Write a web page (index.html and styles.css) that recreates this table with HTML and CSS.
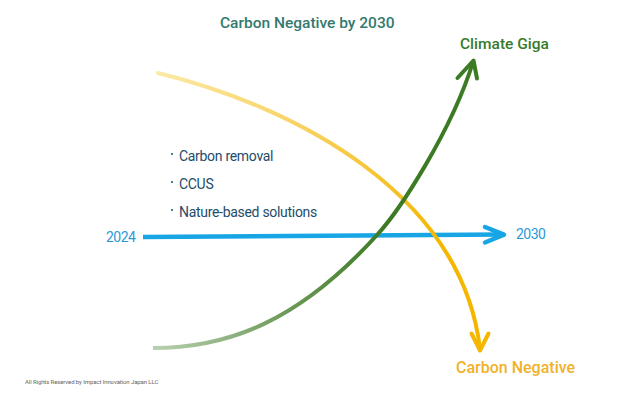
FILE: index.html
```html
<!DOCTYPE html>
<html lang="en">
<head>
<meta charset="utf-8">
<title>Carbon Negative by 2030</title>
<link rel="stylesheet" href="styles.css">
</head>
<body>
<div class="slide">
  <svg class="diagram" width="641" height="400" viewBox="0 0 641 400" aria-hidden="true">
    <defs>
      <linearGradient id="gYellow" gradientUnits="userSpaceOnUse" x1="158" y1="73" x2="445" y2="240">
        <stop offset="0" stop-color="#fce9a6"/>
        <stop offset="0.45" stop-color="#f8d263"/>
        <stop offset="1" stop-color="#f5b600"/>
      </linearGradient>
      <linearGradient id="gGreen" gradientUnits="userSpaceOnUse" x1="153" y1="348" x2="385" y2="230">
        <stop offset="0" stop-color="#b8d0af"/>
        <stop offset="0.5" stop-color="#6e9b5a"/>
        <stop offset="1" stop-color="#3c7b24"/>
      </linearGradient>
    </defs>
    <!-- timeline -->
    <line x1="143" y1="237" x2="502" y2="234.5" stroke="#18a5e4" stroke-width="4.5"/>
    <polyline points="485,227 504,234.7 485,242.5" fill="none" stroke="#18a5e4" stroke-width="4.5" stroke-linecap="round" stroke-linejoin="round"/>
    <!-- carbon negative curve -->
    <path d="M158,73 C300,108 462,196 480,349" fill="none" stroke="url(#gYellow)" stroke-width="4" stroke-linecap="round"/>
    <polyline points="471.5,333.5 480,350.5 488.5,333.5" fill="none" stroke="#f5b600" stroke-width="4" stroke-linecap="round" stroke-linejoin="round"/>
    <!-- climate giga curve -->
    <path d="M153,348 C230,348 300,320 377,235 C400,210 452,130 473,62" fill="none" stroke="url(#gGreen)" stroke-width="4" stroke-linecap="butt"/>
    <polyline points="457.5,78 473.5,60.5 477,78.5" fill="none" stroke="#3c7b24" stroke-width="4" stroke-linecap="round" stroke-linejoin="round"/>
  </svg>

  <h1 class="title">Carbon Negative by 2030</h1>

  <span class="label label-giga">Climate Giga</span>
  <span class="label label-negative">Carbon Negative</span>
  <span class="year year-start">2024</span>
  <span class="year year-end">2030</span>

  <ul class="bullets">
    <li>Carbon removal</li>
    <li>CCUS</li>
    <li>Nature-based solutions</li>
  </ul>

  <p class="footer">All Rights Reserved by Impact Innovation Japan LLC</p>
</div>
</body>
</html>
```

FILE: styles.css
```css
html, body {
  margin: 0;
  padding: 0;
  background: #ffffff;
}

.slide {
  position: relative;
  width: 641px;
  height: 400px;
  overflow: hidden;
  background: #ffffff;
  font-family: Roboto, "Liberation Sans", "Noto Sans", sans-serif;
}

.diagram {
  position: absolute;
  left: 0;
  top: 0;
  display: block;
}

.title {
  position: absolute;
  left: 220px;
  top: 16px;
  margin: 0;
  font-size: 15.5px;
  line-height: 1;
  font-weight: 500;
  color: #327a6f;
  white-space: nowrap;
}

.label {
  position: absolute;
  line-height: 1;
  font-weight: 500;
  white-space: nowrap;
}

.label-giga {
  left: 460px;
  top: 37px;
  font-size: 15.5px;
  color: #387b2b;
}

.label-negative {
  left: 456px;
  top: 360px;
  font-size: 16px;
  color: #f0b22a;
}

.year {
  position: absolute;
  font-size: 14px;
  line-height: 1;
  letter-spacing: -0.5px;
  color: #2a9ad7;
  white-space: nowrap;
}

.year-start {
  left: 106px;
  top: 230px;
}

.year-end {
  left: 516px;
  top: 227px;
}

.bullets {
  position: absolute;
  left: 171px;
  top: 142px;
  margin: 0;
  padding: 0;
  list-style: none;
  display: flex;
  flex-direction: column;
}

.bullets li {
  display: flex;
  align-items: center;
  height: 28px;
  font-size: 14px;
  line-height: 28px;
  letter-spacing: -0.3px;
  color: #1e4c6a;
  white-space: nowrap;
}

.bullets li::before {
  content: "";
  width: 2.4px;
  height: 2.4px;
  border-radius: 50%;
  background: #1e4c6a;
  margin-right: 5.6px;
  transform: translateY(-2px);
  flex: none;
}

.footer {
  position: absolute;
  left: 25px;
  top: 379px;
  margin: 0;
  font-size: 6px;
  line-height: 6px;
  letter-spacing: -0.1px;
  color: #666666;
  white-space: nowrap;
}
```
